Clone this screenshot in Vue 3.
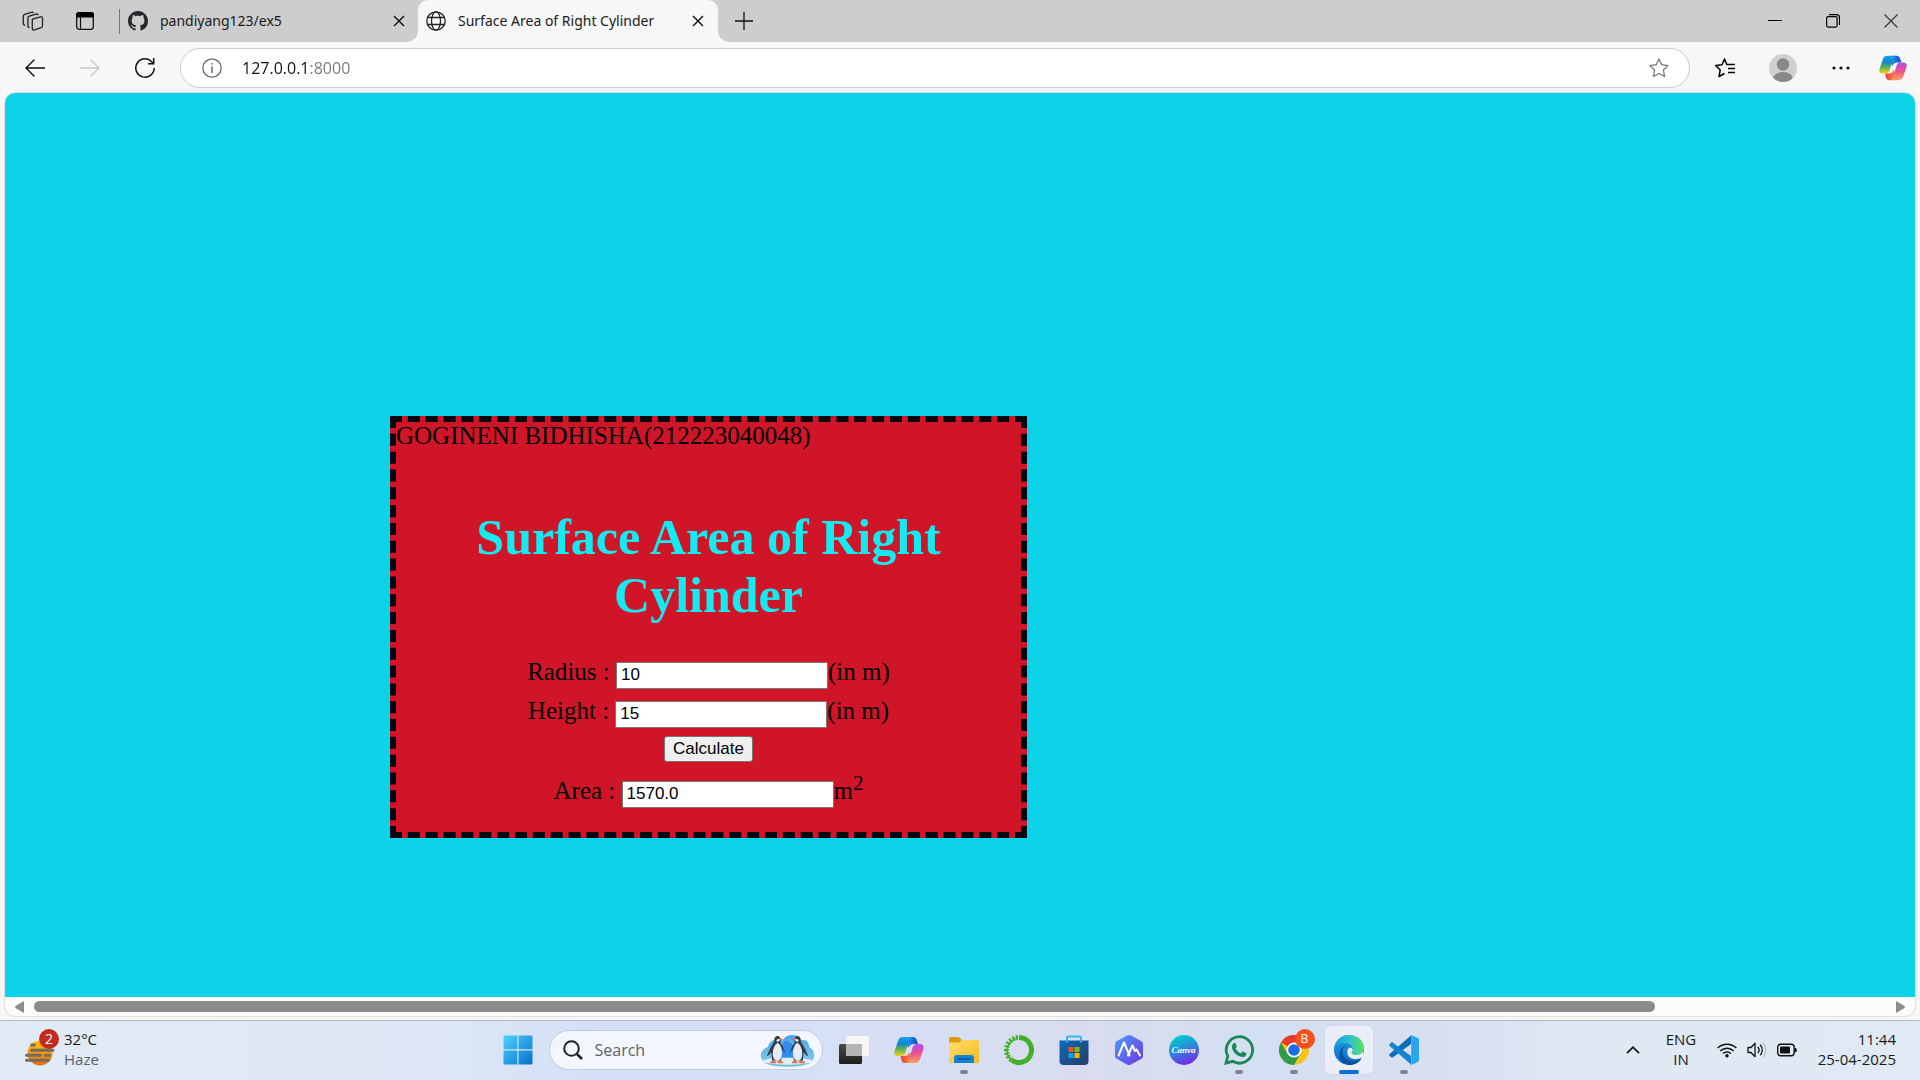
<script setup>
import { ref } from 'vue'

const address = ref('127.0.0.1:8000')
const query = ref('')
const radius = ref('10')
const height = ref('15')
const area = ref('1570.0')

function calculate() {
  const r = Number(radius.value)
  const h = Number(height.value)
  area.value = (2 * 3.14 * r * h + 2 * 3.14 * r * r).toFixed(1)
}
</script>

<template>
  <div class="desktop">
    <svg class="defs" width="0" height="0" aria-hidden="true">
      <defs>
        <linearGradient id="cpA" x1="0" y1="0" x2="0" y2="1">
          <stop offset="0" stop-color="#18a4f2" /><stop offset=".35" stop-color="#1484c8" />
          <stop offset=".65" stop-color="#5fb552" /><stop offset="1" stop-color="#f8d012" />
        </linearGradient>
        <linearGradient id="cpB" x1="0" y1="0" x2="0" y2="1">
          <stop offset="0" stop-color="#b04cf0" /><stop offset=".5" stop-color="#ee4f8e" />
          <stop offset="1" stop-color="#fda45a" />
        </linearGradient>
        <linearGradient id="cpC" x1="0" y1="0" x2="1" y2="0">
          <stop offset="0" stop-color="#1aa3ee" /><stop offset="1" stop-color="#1c45c9" />
        </linearGradient>
        <linearGradient id="cpD" x1="0" y1="0" x2="1" y2="0">
          <stop offset="0" stop-color="#e8403c" /><stop offset="1" stop-color="#fb8a4c" />
        </linearGradient>
        <linearGradient id="win" x1="0" y1="0" x2="1" y2="1">
          <stop offset="0" stop-color="#4fd3fd" /><stop offset="1" stop-color="#0370cc" />
        </linearGradient>
        <linearGradient id="fold" x1="0" y1="0" x2="1" y2="1">
          <stop offset="0" stop-color="#ffdf70" /><stop offset="1" stop-color="#fcb91c" />
        </linearGradient>
        <linearGradient id="store" x1="0" y1="0" x2="1" y2="1">
          <stop offset="0" stop-color="#0d6dbd" /><stop offset="1" stop-color="#243a66" />
        </linearGradient>
        <linearGradient id="nav" x1="0" y1="0" x2="1" y2="1">
          <stop offset="0" stop-color="#4d9df5" /><stop offset="1" stop-color="#6b35e8" />
        </linearGradient>
        <linearGradient id="edgeA" x1="0" y1="0" x2="1" y2="0">
          <stop offset="0" stop-color="#1f9be0" /><stop offset=".5" stop-color="#2cc0d4" />
          <stop offset="1" stop-color="#5fe05a" />
        </linearGradient>
        <linearGradient id="edgeB" x1="0" y1="0" x2="0" y2="1">
          <stop offset="0" stop-color="#1fa3e6" /><stop offset="1" stop-color="#0f66c4" />
        </linearGradient>
        <linearGradient id="sun" x1="0" y1="0" x2="0" y2="1">
          <stop offset="0" stop-color="#fdc60c" /><stop offset="1" stop-color="#ec6a08" />
        </linearGradient>
        <linearGradient id="tvA" x1="0" y1="0" x2="0" y2="1">
          <stop offset="0" stop-color="#4a4a48" /><stop offset="1" stop-color="#1c1c1a" />
        </linearGradient>
        <linearGradient id="ice" x1="0" y1="0" x2="0" y2="1">
          <stop offset="0" stop-color="#4aa3ea" /><stop offset="1" stop-color="#7fc8ea" />
        </linearGradient>
        <symbol id="copilot" viewBox="0 0 30 30">
          <path d="M16 2h3c2 0 3 1 3.500 2.500L24 9h-4c-3 0-4.500 1-5.500 4L12 9z" fill="url(#cpC)" />
          <path d="M14 28h-3c-2 0-3-1-3.500-2.500L6.500 21H10c3 0 4.500-1 5.500-4l2.500 4z" fill="url(#cpD)" />
          <path d="M9 2h9.500c-2 0-3 1.200-3.600 3.200l-3.500 12c-.8 2.600-2.200 3.800-5 3.800H4c-3 0-4.300-2-3.500-5L4.200 5.500C5 3 6.500 2 9 2z" fill="url(#cpA)" />
          <path d="M21 28h-9.500c2 0 3-1.200 3.600-3.200l3.500-12C19.400 10.200 20.800 9 23.600 9H26c3 0 4.300 2 3.500 5l-3.700 10.500C25 27 23.500 28 21 28z" fill="url(#cpB)" />
        </symbol>
        <symbol id="cross" viewBox="0 0 12 12">
          <path d="M1 1l10 10M11 1L1 11" fill="none" stroke="currentColor" stroke-width="1.500" />
        </symbol>
      </defs>
    </svg>

    <header class="tabstrip">
      <button class="strip-btn" aria-label="Workspaces">
        <svg width="22" height="20" viewBox="0 0 22 20" fill="none" stroke="#222" stroke-width="1.300">
          <path d="M10.500 8.200l8-2.400c1.200-.3 2 .2 2 1.400v7.600c0 1-.4 1.600-1.400 1.900l-6.600 2.200c-1.300.4-2.200 0-2.200-1.300V9.500c0-.7 0-1 .2-1.300z" />
          <path d="M7.500 16.500c-1 .1-1.600-.4-1.600-1.500V7c0-1.100.4-1.600 1.400-1.900l6.700-2c1.100-.3 1.900 0 2.100 1" />
          <path d="M3.200 14c-1.100.2-1.900-.3-1.900-1.500V5.200c0-1.100.4-1.600 1.400-1.900l6.500-2c1.200-.4 2-.1 2.300.7" />
        </svg>
      </button>
      <button class="strip-btn" aria-label="Tab actions">
        <svg width="18" height="18" viewBox="0 0 18 18">
          <rect x=".7" y=".7" width="16.600" height="16.600" rx="2.500" fill="none" stroke="#111" stroke-width="1.300" />
          <path d="M0 5.500V3a3 3 0 0 1 3-3h12a3 3 0 0 1 3 3v2.500z" fill="#000" />
          <path d="M4.500 5v12" stroke="#111" stroke-width="1.200" />
        </svg>
      </button>
      <div class="divider"></div>
      <div class="tab">
        <svg width="20" height="20" viewBox="0 0 16 16" fill="#24292f">
          <path d="M8 0C3.580 0 0 3.580 0 8c0 3.540 2.290 6.530 5.470 7.590.4.070.55-.17.55-.38 0-.19-.01-.82-.01-1.490-2.010.37-2.530-.49-2.690-.94-.09-.23-.48-.94-.82-1.130-.28-.15-.68-.52-.01-.53.630-.01 1.080.58 1.230.82.720 1.210 1.870.87 2.330.66.070-.52.280-.87.510-1.070-1.780-.2-3.640-.89-3.640-3.950 0-.87.310-1.590.820-2.150-.08-.2-.36-1.020.080-2.120 0 0 .67-.21 2.200.820.640-.18 1.320-.27 2-.27s1.360.09 2 .27c1.530-1.040 2.200-.82 2.200-.82.440 1.100.160 1.920.080 2.120.510.560.820 1.270.820 2.150 0 3.070-1.870 3.750-3.650 3.950.290.250.540.730.540 1.480 0 1.070-.01 1.930-.01 2.200 0 .21.150.46.550.38A8.010 8.010 0 0 0 16 8c0-4.420-3.580-8-8-8z" />
        </svg>
        <span class="tab-title">pandiyang123/ex5</span>
        <button class="tab-close" aria-label="Close tab"><svg width="12" height="12"><use href="#cross" /></svg></button>
      </div>
      <div class="tab active">
        <svg width="20" height="20" viewBox="0 0 20 20" fill="none" stroke="#222" stroke-width="1.300">
          <circle cx="10" cy="10" r="9.200" /><ellipse cx="10" cy="10" rx="4.500" ry="9.200" />
          <path d="M1.500 6.500h17M1.500 13.500h17" />
        </svg>
        <span class="tab-title">Surface Area of Right Cylinder</span>
        <button class="tab-close" aria-label="Close tab"><svg width="12" height="12"><use href="#cross" /></svg></button>
      </div>
      <button class="strip-btn" aria-label="New tab">
        <svg width="18" height="18"><path d="M9 0v18M0 9h18" stroke="#111" stroke-width="1.300" /></svg>
      </button>
      <div class="win-controls">
        <button aria-label="Minimize"><svg width="14" height="14"><path d="M0 6.500h14" stroke="#000" /></svg></button>
        <button aria-label="Restore">
          <svg width="14" height="14" fill="none" stroke="#000" stroke-width="1.200">
            <rect x=".6" y="2.600" width="10.500" height="10.500" rx="1.500" /><path d="M3 .6h7.500a3 3 0 0 1 3 3V11" />
          </svg>
        </button>
        <button aria-label="Close window"><svg width="14" height="14"><path d="M.5.5l13 13M13.500.5l-13 13" stroke="#333" stroke-width="1.200" /></svg></button>
      </div>
    </header>

    <nav class="toolbar">
      <button class="nav-btn" aria-label="Back">
        <svg width="20" height="18" fill="none" stroke="#111" stroke-width="1.400"><path d="M20 9H1M9.500.5L1 9l8.500 8.500" /></svg>
      </button>
      <button class="nav-btn" aria-label="Forward" disabled>
        <svg width="20" height="18" fill="none" stroke="#c8c8c8" stroke-width="1.400"><path d="M0 9h19M10.500.5L19 9l-8.500 8.500" /></svg>
      </button>
      <button class="nav-btn" aria-label="Refresh">
        <svg width="20" height="20" fill="none" stroke="#111" stroke-width="1.500"><path d="M19.200 10a9.200 9.200 0 1 1-2.500-6.300L18.500 5.500M18.700 0v5.700H13" /></svg>
      </button>
      <div class="address">
        <svg width="20" height="20" viewBox="0 0 20 20" fill="none" stroke="#666" stroke-width="1.300">
          <circle cx="10" cy="10" r="9.200" /><path d="M10 8.500V15M10 5v1.600" stroke-width="1.500" />
        </svg>
        <input v-model="address" class="url" type="text" aria-label="Address" />
        <button class="fav" aria-label="Add to favorites">
          <svg width="20" height="20" viewBox="0 0 20 20" fill="none" stroke="#777" stroke-width="1.300" stroke-linejoin="round">
            <path d="M10 1l2.700 5.700 6.300.9-4.600 4.400 1.200 6.500-5.600-3-5.600 3 1.200-6.500L1 7.600l6.300-.9z" />
          </svg>
        </button>
      </div>
      <div class="tools">
        <button aria-label="Favorites">
          <svg width="20" height="20" viewBox="0 0 20 20" fill="none" stroke="#000" stroke-width="1.500" stroke-linejoin="round">
            <path d="M18 6.500h-6.200L9.500 1 7 6.700l-6.200.9L5.200 12 4 18.500l5.500-3M13 10.500h7M13 14.500h7M13.500 6.500H20" />
          </svg>
        </button>
        <button aria-label="Profile">
          <svg width="28" height="28" viewBox="0 0 28 28">
            <clipPath id="av"><circle cx="14" cy="14" r="14" /></clipPath>
            <g clip-path="url(#av)"><rect width="28" height="28" fill="#d2d0ce" /><circle cx="14" cy="10.500" r="6.200" fill="#8a8886" /><ellipse cx="14" cy="25" rx="10" ry="7" fill="#8a8886" /></g>
          </svg>
        </button>
        <button aria-label="Settings and more">
          <svg width="18" height="4" fill="#111"><circle cx="2" cy="2" r="1.600" /><circle cx="9" cy="2" r="1.600" /><circle cx="16" cy="2" r="1.600" /></svg>
        </button>
        <button class="copilot-btn" aria-label="Copilot"><svg width="28" height="28"><use href="#copilot" /></svg></button>
      </div>
    </nav>

    <div class="viewport">
      <main class="page">
        <form class="card" @submit.prevent="calculate">
          <div class="owner">GOGINENI BIDHISHA(212223040048)</div>
          <h1>Surface Area of Right Cylinder</h1>
          <div class="row"><label for="radius">Radius : </label><input id="radius" v-model="radius" type="text" />(in m)</div>
          <div class="row"><label for="height">Height : </label><input id="height" v-model="height" type="text" />(in m)</div>
          <div class="row submit"><button type="submit">Calculate</button></div>
          <div class="row"><label for="area">Area : </label><input id="area" v-model="area" type="text" />m<sup>2</sup></div>
        </form>
      </main>
      <div class="scrollbar">
        <svg width="9" height="12" fill="#8b8b8b"><path d="M9 1v10q0 1-1 .6L.6 7Q-.4 6 .6 5L8 .4Q9 0 9 1z" /></svg>
        <div class="track"><div class="thumb"></div></div>
        <svg width="9" height="12" fill="#8b8b8b"><path d="M0 1v10q0 1 1 .6L8.400 7q1-1 0-2L1 .4Q0 0 0 1z" /></svg>
      </div>
    </div>

    <footer class="taskbar">
      <button class="weather">
        <span class="weather-icon">
          <svg width="34" height="36" viewBox="0 0 34 36">
            <circle cx="16" cy="21" r="12.500" fill="url(#sun)" />
            <path d="M7.500 13h3M7.500 18.200H29M2.500 23.200h14M21.500 23.200h4M2.500 28.200h22" stroke="#716c66" stroke-width="3" stroke-linecap="round" />
          </svg>
          <span class="count">2</span>
        </span>
        <span class="lines"><span>32°C</span><span class="muted">Haze</span></span>
      </button>

      <div class="apps">
        <button class="app" aria-label="Start">
          <svg width="30" height="30" viewBox="0 0 30 30" fill="url(#win)"><path d="M2 .5h12.300v13.800H.5V2A1.500 1.500 0 0 1 2 .5zM15.500.5H28A1.500 1.500 0 0 1 29.500 2v12.300h-14zM.5 15.500h13.800v14H2A1.500 1.500 0 0 1 .5 28zM15.500 15.500h14V28a1.500 1.500 0 0 1-1.500 1.500H15.500z" /></svg>
        </button>
        <label class="search">
          <svg width="20" height="20" fill="none" stroke="#222" stroke-width="2"><circle cx="8.500" cy="8.500" r="7.300" /><path d="M13.800 13.800l5.200 5.200" stroke-width="2.600" /></svg>
          <input v-model="query" type="text" placeholder="Search" aria-label="Search" />
          <svg width="55" height="34" viewBox="0 0 56 34">
            <path d="M4 29C-2 24 1 16 8 14c1-6 8-10 15-7 4-7 15-7 19 0 6-1 8 3 8 7 6 3 7 11 2 15z" fill="url(#ice)" />
            <path d="M20 13l7-6 9 6 2 12H20z" fill="#2f8bec" />
            <ellipse cx="28" cy="28.500" rx="26" ry="3.500" fill="#e6edf8" /><path d="M4 30q24 4 48 0-8 4-24 4T4 30z" fill="#66c2dc" />
            <g id="pg">
              <path d="M19.500 3c-3-1-5 1-5 4 0 3-3 5-4.500 9l-3 7q2 0 4.500-4l1 9h9l1-12 3.500 4.500-3-7.500c-2-2-2.500-3-2-6z" fill="#343b49" />
              <path d="M18 9.500c-3 2-5 6-5 11 0 4 1.500 7.500 4.500 7.500s5-3.500 5-8-1.500-8.500-4.500-10.500z" fill="#e6ebf4" />
              <path d="M17 6.500q2-1.500 3.500 0-1 2.500-3.500 2z" fill="#fff" />
              <path d="M19.500 4.500l4.500 1.500-3.500 1zM11 28.500h6l-1 2h-6zM18 28.500h5l1 2h-6z" fill="#e06c3e" />
            </g>
            <g transform="translate(56 0) scale(-1 1)"><use href="#pg" /></g>
          </svg>
        </label>
        <button class="app" aria-label="Task view">
          <svg width="30" height="30" viewBox="0 0 30 30">
            <rect x="0" y="9" width="23" height="20" rx="1.500" fill="url(#tvA)" /><rect x="7" y="1" width="23" height="20" rx="1.500" fill="#f6f6f6" />
            <path d="M7 9h16v12H8.500A1.500 1.500 0 0 1 7 19.500z" fill="#b4b4b4" />
          </svg>
        </button>
        <button class="app" aria-label="Copilot"><svg width="30" height="30"><use href="#copilot" /></svg></button>
        <button class="app running" aria-label="File Explorer">
          <svg width="30" height="30" viewBox="0 0 30 30">
            <path d="M0 4a2 2 0 0 1 2-2h7.500l3.500 3v5H0z" fill="#dc9c0c" /><path d="M0 7.500h10L13 5h15.500A1.500 1.500 0 0 1 30 6.500v20A1.500 1.500 0 0 1 28.500 28h-27A1.500 1.500 0 0 1 0 26.500z" fill="url(#fold)" />
            <path d="M5 28v-5.500a2.500 2.500 0 0 1 2.500-2.500h15a2.500 2.500 0 0 1 2.500 2.500V28z" fill="#1182d6" /><path d="M8.500 24h13" stroke="#0a5298" stroke-width="1.500" />
          </svg>
        </button>
        <button class="app" aria-label="Anaconda">
          <svg width="30" height="30" viewBox="0 0 30 30" fill="none" stroke="#43b02a">
            <path d="M15 2.500a12.500 12.500 0 1 1-7.500 22.500" stroke-width="5" />
            <path d="M7.500 25A12.500 12.500 0 0 1 15 2.500" stroke-width="5" stroke-dasharray="2 1.500" /><path d="M6.500 24.500A13 13 0 0 1 14 3" stroke-width="1.500" />
          </svg>
        </button>
        <button class="app" aria-label="Microsoft Store">
          <svg width="30" height="30" viewBox="0 0 30 30">
            <path d="M8 7V3a1.500 1.500 0 0 1 1.500-1.500h11A1.500 1.500 0 0 1 22 3v4" fill="none" stroke="#30b8f0" stroke-width="2" />
            <path d="M.5 5.500h29V26a4 4 0 0 1-4 4h-21a4 4 0 0 1-4-4z" fill="url(#store)" />
            <path d="M9.500 12h5v5h-5z" fill="#f25022" /><path d="M15.500 12h5v5h-5z" fill="#7fba00" /><path d="M9.500 18h5v5h-5z" fill="#00a4ef" /><path d="M15.500 18h5v5h-5z" fill="#ffb900" />
            <path d="M8 5.500v2M22 5.500v2" stroke="#30b8f0" stroke-width="2" />
          </svg>
        </button>
        <button class="app" aria-label="Navigator">
          <svg width="30" height="30" viewBox="0 0 30 30">
            <path d="M13 .6q2-1 4 0l10 5.400q2 1 2 3v12q0 2-2 3l-10 5.400q-2 1-4 0L3 24q-2-1-2-3V9q0-2 2-3z" fill="url(#nav)" />
            <path d="M4.500 20.500L10 7.500l5.500 13M14 20.500l4.500-10 2.500 5.500M22.500 14.500l3.500 6" fill="none" stroke="#fff" stroke-width="2" stroke-linejoin="round" stroke-linecap="round" />
          </svg>
        </button>
        <button class="app" aria-label="Canva"><span class="canva">Canva</span></button>
        <button class="app running" aria-label="WhatsApp">
          <svg width="30" height="30" viewBox="0 0 30 30">
            <path d="M2 28l1.800-6.800A13.200 13.200 0 1 1 8.700 26.300z" fill="none" stroke="#1b8755" stroke-width="2.800" />
            <path d="M9.500 8.200c.6-.6 1.700-.6 2 .1l1.200 2.700c.2.600 0 1-.4 1.500l-.8 1c1.300 2.300 3 3.900 5.300 4.900l1.200-1.400c.4-.4.800-.5 1.300-.3l2.700 1.300c.6.300.6.800.4 1.500-.6 1.900-2.400 2.800-4.400 2.500-5-.8-9.300-5-10-9.500-.2-1.800.3-3.200 1.500-4.300z" fill="#1b8755" />
          </svg>
        </button>
        <button class="app running" aria-label="Chrome">
          <svg width="30" height="30" viewBox="0 0 30 30">
            <circle cx="15" cy="15" r="15" fill="#fcc31e" /><path d="M15 15L2 7.500A15 15 0 0 1 28 7.500H15z" fill="#e33b2e" />
            <path d="M2 7.500A15 15 0 0 0 15 30l6.500-11.200L15 15l-6.500 3.800z" fill="#2c9e48" /><circle cx="15" cy="15" r="7.500" fill="#fff" /><circle cx="15" cy="15" r="5.800" fill="#1b6fe6" />
          </svg>
          <span class="profile">B</span>
        </button>
        <button class="app running current" aria-label="Edge">
          <svg width="30" height="30" viewBox="0 0 30 30">
            <circle cx="15" cy="15" r="15" fill="url(#edgeB)" />
            <path d="M.1 14C1 5.500 7 0 15 0c9 0 15 6 15 12.500 0 5-3.500 7.500-7.500 7.500-3.500 0-5-1.200-5-2.300 0-1 1.200-1.600 1.200-3.700C18.700 11 15.500 8 11 8 5.500 8 1.500 10.500.1 14z" fill="url(#edgeA)" />
            <path d="M12 10.500c-3.500 2-4.300 6-3 9.500 2 5.500 9 8 15 5.500 1.500-.6 2.500-1 3.500-2-3 5-8 6.500-12.500 6.500C8 29.500 5.500 24 5.500 19.500c0-4 2.500-8 6.500-9z" fill="#0d4f9c" />
            <path d="M17.500 17.700c0 1.100 1.500 2.300 5 2.300 3 0 5.600-1.400 6.800-4v5.500l-2 1.500c-6 2.500-14 1-14-6 0-2 .8-3.500 2-4.500 2 .3 3.300 1 3.400 2 0 1.800-1.200 2.200-1.200 3.200z" fill="#eaeef8" />
          </svg>
        </button>
        <button class="app running" aria-label="Visual Studio Code">
          <svg width="30" height="30" viewBox="0 0 30 30">
            <path d="M22 .5v8.500L4 22.300c-.6.500-1.300.4-1.800 0l-1.600-1.500c-.6-.6-.6-1.300 0-1.900z" fill="#0a6fb8" />
            <path d="M22 29.500V21L4 7.700c-.6-.5-1.300-.4-1.800 0L.6 9.200c-.6.6-.6 1.300 0 1.900z" fill="#1285d0" />
            <path d="M22 0l6.800 3c.8.400 1.200 1 1.200 1.800v20.400c0 .8-.4 1.400-1.200 1.800L22 30c-.7.200-1 0-1.500-.5.800.5 1.700.2 1.700-1V1.500c0-1-.9-1.500-1.700-1 .5-.5 1-.7 1.500-.5z" fill="#2ba4ee" />
          </svg>
        </button>
      </div>

      <div class="tray">
        <button class="chevron" aria-label="Show hidden icons"><svg width="14" height="8" fill="none" stroke="#111" stroke-width="1.700"><path d="M1 7.200l6-6 6 6" /></svg></button>
        <button class="lines lang"><span>ENG</span><span>IN</span></button>
        <button class="status" aria-label="Network, volume and battery">
          <svg width="20" height="16" viewBox="0 0 20 16" fill="none" stroke="#111" stroke-width="1.400"><path d="M.6 6a13.500 13.500 0 0 1 18.800 0M3.300 9a9.600 9.600 0 0 1 13.400 0M6 11.600a5.800 5.800 0 0 1 8 0" /><circle cx="10" cy="13.800" r="1.700" fill="#111" stroke="none" /></svg>
          <svg width="20" height="16" viewBox="0 0 20 16" fill="none" stroke="#111" stroke-width="1.300"><path d="M1 5.500h3L8 1.300v13.400l-4-4.200H1z" stroke-linejoin="round" /><path d="M10.800 5a4.500 4.500 0 0 1 0 6M13.200 2.700a8 8 0 0 1 0 10.600" /><path d="M16 .7a11 11 0 0 1 0 14.600" stroke="#b4bcc6" /></svg>
          <svg width="20" height="14" viewBox="0 0 20 14"><rect x=".7" y="1.200" width="16.500" height="11.600" rx="3" fill="none" stroke="#111" stroke-width="1.400" /><rect x="3" y="3.500" width="10" height="7" rx=".8" fill="#111" /><path d="M17.500 4.500q2.500.5 2.500 2.500t-2.500 2.500z" fill="#111" /></svg>
        </button>
        <button class="lines clock"><span>11:44</span><span>25-04-2025</span></button>
      </div>
    </footer>
  </div>
</template>

<style>
body {
  margin: 0;
}
</style>

<style scoped>
.desktop {
  display: flex;
  flex-direction: column;
  min-height: 100vh;
  background: #f7f7f7;
  color: #1a1a1a;
  font-family: "Open Sans", "Noto Sans", sans-serif;
  font-size: 15px;
}
.defs {
  position: absolute;
}
svg {
  display: block;
  flex: none;
}
button {
  display: flex;
  align-items: center;
  justify-content: center;
  flex: none;
  padding: 0;
  border: 0;
  background: none;
  color: inherit;
  font: inherit;
}
input {
  outline: 0;
}

.tabstrip {
  display: flex;
  align-items: center;
  height: 42px;
  padding-left: 7px;
  background: #cdcdcd;
}
.strip-btn {
  width: 52px;
  height: 42px;
}
.divider {
  width: 1px;
  height: 25px;
  margin-left: 8px;
  background: #777;
}
.tab {
  position: relative;
  display: flex;
  align-items: center;
  gap: 12px;
  box-sizing: border-box;
  width: 298px;
  height: 42px;
  padding: 0 9px 0 8px;
  font-family: "Noto Sans", sans-serif;
  font-size: 14px;
}
.tab.active {
  width: 300px;
  padding-right: 10px;
  border-radius: 10px 10px 0 0;
  background: #f7f7f7;
}
.tab.active::before,
.tab.active::after {
  content: "";
  position: absolute;
  bottom: 0;
  width: 10px;
  height: 10px;
}
.tab.active::before {
  right: 100%;
  background: radial-gradient(circle at 0 0, #cdcdcd 9px, #f7f7f7 10px);
}
.tab.active::after {
  left: 100%;
  background: radial-gradient(circle at 100% 0, #cdcdcd 9px, #f7f7f7 10px);
}
.tab-title {
  flex: 1;
  padding-bottom: 2px;
  white-space: nowrap;
}
.tab-close {
  width: 20px;
  height: 20px;
}
.win-controls {
  display: flex;
  margin-left: auto;
}
.win-controls button {
  width: 58px;
  height: 42px;
}

.toolbar {
  display: flex;
  align-items: center;
  height: 51px;
  padding: 0 4px 0 7px;
}
.nav-btn {
  width: 55px;
  height: 40px;
}
.address {
  display: flex;
  align-items: center;
  gap: 20px;
  flex: 1;
  box-sizing: border-box;
  height: 40px;
  margin: 0 6px 0 8px;
  padding: 0 20px 0 21px;
  border: 1px solid #cbcbcb;
  border-radius: 20px;
  background: #fff;
}
.url {
  flex: 1;
  min-width: 0;
  padding: 0;
  border: 0;
  background: linear-gradient(to right, #111 67px, #777 67px);
  background-clip: text;
  -webkit-background-clip: text;
  color: transparent;
  font: 16px/24px "Open Sans", "Noto Sans", sans-serif;
}
.tools {
  display: flex;
}
.tools button {
  width: 58px;
  height: 40px;
}
.tools .copilot-btn {
  width: 46px;
}

.viewport {
  display: flex;
  flex-direction: column;
  flex: 1;
  margin: 0 5px 4px;
  border-radius: 10px;
  overflow: hidden;
  box-shadow: 0 0 2px #aaa;
  background: #fcfcfc;
}
.page {
  flex: 1;
  padding: 323px 0 100px 385px;
  background: #0cd3e7;
  color: #000;
  font: 25px/28px "Liberation Serif", serif;
}
.card {
  box-sizing: border-box;
  width: 637px;
  height: 422px;
  border: 6px dashed #05060f;
  background: #d11528;
}
.card h1 {
  margin: 58px 60px 28px;
  color: #13ebf2;
  font-size: 50px;
  line-height: 58px;
  text-align: center;
}
.row {
  height: 39px;
  line-height: 39px;
  text-align: center;
  white-space: pre;
}
.row.submit {
  height: 31px;
  margin-bottom: 10px;
  line-height: 31px;
}
.row input {
  box-sizing: border-box;
  width: 212px;
  height: 27px;
  margin: 0;
  padding: 1px 4px;
  border: 1px solid #767676;
  background: #fff;
  color: #000;
  font: 17px/20px "Liberation Sans", sans-serif;
}
.row button {
  display: inline-block;
  width: 89px;
  height: 26px;
  border: 1px solid #767676;
  border-radius: 3px;
  background: #efefef;
  color: #000;
  font: 17px/20px "Liberation Sans", sans-serif;
}
.row sup {
  font-size: 21px;
  line-height: 0;
}

.scrollbar {
  display: flex;
  align-items: center;
  gap: 10px;
  height: 19px;
  padding: 0 10px;
}
.track {
  flex: 1;
}
.thumb {
  width: 87.5%;
  height: 11px;
  border-radius: 6px;
  background: #8b8b8b;
}

.taskbar {
  display: grid;
  grid-template-columns: 1fr auto 1fr;
  align-items: center;
  box-sizing: border-box;
  height: 60px;
  padding: 0 0 1px 1px;
  border-top: 1px solid #b2b8c4;
  background: linear-gradient(to right, #e1ebf6, #dfe9f6 20%, #d3dff7 32%, #d6e0f7 43%, #d8dcee 56%, #d3dff3 66%, #d8dff0 74%, #dfe9f4 84%, #e0eaf4);
}
.weather {
  justify-self: start;
  gap: 6px;
  padding-left: 23px;
}
.weather-icon {
  position: relative;
}
.count {
  position: absolute;
  top: -3px;
  right: -1px;
  width: 20px;
  border-radius: 50%;
  background: #c42b1c;
  color: #fff;
  font-size: 14px;
  line-height: 20px;
}
.lines {
  display: flex;
  flex-direction: column;
  align-items: start;
  padding-bottom: 3px;
  line-height: 20px;
}
.muted {
  color: #5a6068;
}
.apps {
  display: flex;
  align-items: center;
  gap: 7px;
}
.app {
  position: relative;
  width: 48px;
  height: 48px;
  border-radius: 5px;
}
.running::after {
  content: "";
  position: absolute;
  bottom: 0;
  left: 20px;
  width: 8px;
  height: 4px;
  border-radius: 2px;
  background: #80848e;
}
.current {
  background: #eaeef8;
  box-shadow: 0 0 1px #a8b0c0;
}
.current::after {
  left: 14px;
  width: 20px;
  background: #0672d6;
}
.search {
  display: flex;
  align-items: center;
  gap: 12px;
  box-sizing: border-box;
  width: 274px;
  height: 40px;
  padding: 0 7px 0 13px;
  border: 1px solid #c0cbe2;
  border-radius: 20px;
  background: #f2f6fd;
}
.search input {
  flex: 1;
  min-width: 0;
  padding: 0;
  border: 0;
  background: none;
  font: 16px/24px "Open Sans", "Noto Sans", sans-serif;
}
.search input::placeholder {
  color: #606368;
}
.canva {
  width: 30px;
  border-radius: 50%;
  background: linear-gradient(160deg, #04c4cb 15%, #2f83dc 50%, #7d22ea 90%);
  color: #fff;
  font: italic bold 9px/30px "Liberation Serif", serif;
}
.profile {
  position: absolute;
  top: 3px;
  right: 3px;
  width: 20px;
  border-radius: 50%;
  background: #f4511e;
  color: #fff;
  font-size: 12px;
  line-height: 20px;
}
.tray {
  display: flex;
  align-items: center;
  justify-self: end;
  padding-right: 24px;
}
.chevron {
  width: 38px;
}
.lang {
  width: 58px;
  margin-right: 2px;
  align-items: center;
}
.status {
  gap: 10px;
  width: 90px;
}
.clock {
  align-items: end;
  width: 94px;
}
</style>
